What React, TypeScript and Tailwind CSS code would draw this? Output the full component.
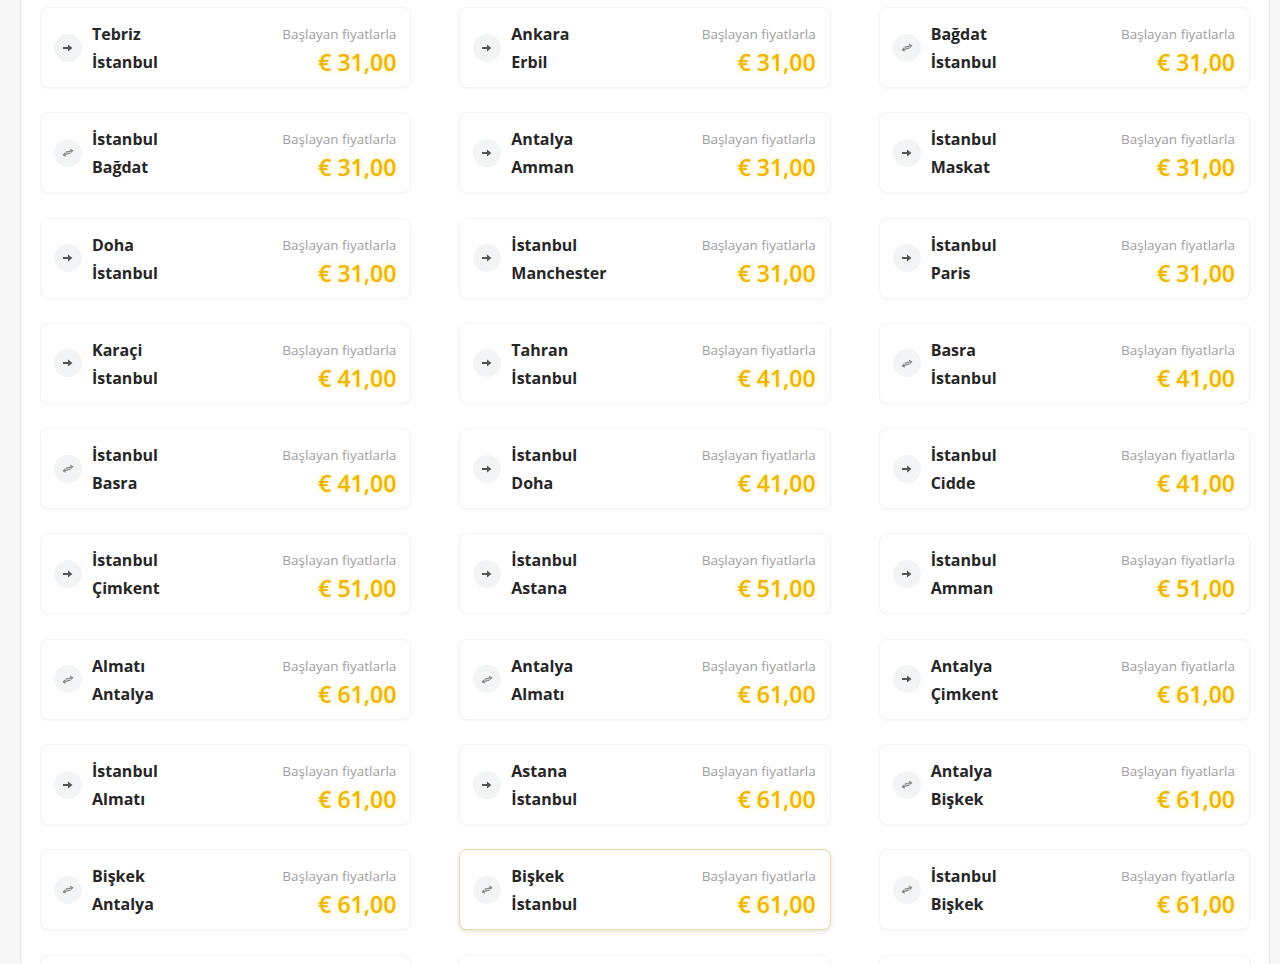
import React from 'react';

interface Route {
  from: string;
  to: string;
  price: string;
  roundTrip: boolean;
  active?: boolean;
}

const routes: Route[] = [
  { from: 'Tebriz', to: 'İstanbul', price: '31,00', roundTrip: false },
  { from: 'Ankara', to: 'Erbil', price: '31,00', roundTrip: false },
  { from: 'Bağdat', to: 'İstanbul', price: '31,00', roundTrip: true },
  { from: 'İstanbul', to: 'Bağdat', price: '31,00', roundTrip: true },
  { from: 'Antalya', to: 'Amman', price: '31,00', roundTrip: false },
  { from: 'İstanbul', to: 'Maskat', price: '31,00', roundTrip: false },
  { from: 'Doha', to: 'İstanbul', price: '31,00', roundTrip: false },
  { from: 'İstanbul', to: 'Manchester', price: '31,00', roundTrip: false },
  { from: 'İstanbul', to: 'Paris', price: '31,00', roundTrip: false },
  { from: 'Karaçi', to: 'İstanbul', price: '41,00', roundTrip: false },
  { from: 'Tahran', to: 'İstanbul', price: '41,00', roundTrip: false },
  { from: 'Basra', to: 'İstanbul', price: '41,00', roundTrip: true },
  { from: 'İstanbul', to: 'Basra', price: '41,00', roundTrip: true },
  { from: 'İstanbul', to: 'Doha', price: '41,00', roundTrip: false },
  { from: 'İstanbul', to: 'Cidde', price: '41,00', roundTrip: false },
  { from: 'İstanbul', to: 'Çimkent', price: '51,00', roundTrip: false },
  { from: 'İstanbul', to: 'Astana', price: '51,00', roundTrip: false },
  { from: 'İstanbul', to: 'Amman', price: '51,00', roundTrip: false },
  { from: 'Almatı', to: 'Antalya', price: '61,00', roundTrip: true },
  { from: 'Antalya', to: 'Almatı', price: '61,00', roundTrip: true },
  { from: 'Antalya', to: 'Çimkent', price: '61,00', roundTrip: false },
  { from: 'İstanbul', to: 'Almatı', price: '61,00', roundTrip: false },
  { from: 'Astana', to: 'İstanbul', price: '61,00', roundTrip: false },
  { from: 'Antalya', to: 'Bişkek', price: '61,00', roundTrip: true },
  { from: 'Bişkek', to: 'Antalya', price: '61,00', roundTrip: true },
  { from: 'Bişkek', to: 'İstanbul', price: '61,00', roundTrip: true, active: true },
  { from: 'İstanbul', to: 'Bişkek', price: '61,00', roundTrip: true },
];

const ArrowIcon = () => (
  <svg width="10" height="8" viewBox="0 0 10 8" className="text-[#555]">
    <path d="M0 3h5V0.6L9.4 4 5 7.4V5H0z" fill="currentColor" />
  </svg>
);

const SwapIcon = () => (
  <svg width="12" height="9" viewBox="0 0 12 9" className="text-[#888]">
    <g fill="none" stroke="currentColor" strokeWidth="1.2" strokeLinecap="round">
      <path d="M4 4.2L10.5 2.6" />
      <path d="M8.6 1.4L10.5 2.6 9.1 4.2" />
      <path d="M8 5.2L1.5 6.8" />
      <path d="M3.4 8L1.5 6.8 2.9 5.2" />
    </g>
  </svg>
);

const cardBase = 'h-[81px] bg-white rounded-lg border';
const cardIdle = 'border-[#f4f4f4] shadow-[0_1px_3px_rgba(0,0,0,0.035)]';

const RouteCard = ({ route }: { route: Route }) => {
  return (
    <div
      className={`${cardBase} flex items-center pl-[13px] pr-[14px] ${
        route.active
          ? 'border-[#e5d9a6] shadow-[0_2px_5px_rgba(120,100,20,0.18)]'
          : cardIdle
      }`}
    >
      <div className="w-[28px] h-[28px] rounded-full bg-[#f3f4f6] flex items-center justify-center shrink-0">
        {route.roundTrip ? <SwapIcon /> : <ArrowIcon />}
      </div>
      <div className="ml-[10px] mt-px flex-1 flex flex-col text-[16px] leading-[28px] font-bold text-[#262626]">
        <span>{route.from}</span>
        <span>{route.to}</span>
      </div>
      <div className="flex flex-col items-end leading-[28px] mt-px">
        <span className="text-[13.5px] text-[#a0a0a0]">Başlayan fiyatlarla</span>
        <span className="text-[23px] font-semibold text-[#efb500] [text-shadow:0_0_6px_rgba(255,214,0,0.45)]">
          € {route.price}
        </span>
      </div>
    </div>
  );
};

export default function App() {
  return (
    <div className="h-[964px] overflow-hidden bg-[#f7f7f7] pl-[20px] pr-[10px] font-['Open_Sans',sans-serif]">
      <div className="h-full bg-white border-x border-[#e3e3e3] px-[19px] pt-[7px]">
        <div className="grid grid-cols-3 gap-x-12 gap-y-[24.3px]">
          {routes.map((route, i) => (
            <RouteCard key={i} route={route} />
          ))}
          {/* next row, only its top edge shows */}
          {[0, 1, 2].map((i) => (
            <div key={`more-${i}`} className={`${cardBase} ${cardIdle}`} />
          ))}
        </div>
      </div>
    </div>
  );
}
